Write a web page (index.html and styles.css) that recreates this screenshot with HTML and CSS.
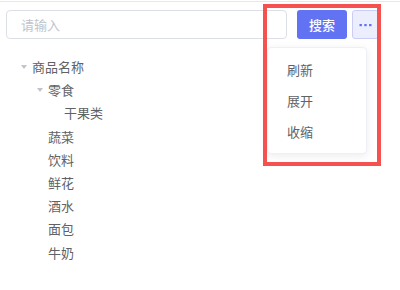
FILE: index.html
```html
<!DOCTYPE html>
<html>
<head>
    <title>Tree Filter</title>
    <link rel="stylesheet" href="styles.css">
</head>
<body>
    <div class="page">
        <div class="toolbar">
            <input type="text" class="search-input" placeholder="请输入">
            <button type="button" class="search-button">搜索</button>
            <button type="button" class="more-button">
                <svg width="13" height="4" viewBox="0 0 13 4">
                    <rect x="0.5" y="1" width="2.4" height="2.2" fill="#5e72f2"/>
                    <rect x="5.3" y="1" width="2.4" height="2.2" fill="#5e72f2"/>
                    <rect x="10.1" y="1" width="2.4" height="2.2" fill="#5e72f2"/>
                </svg>
            </button>
        </div>

        <ul class="dropdown">
            <li>刷新</li>
            <li>展开</li>
            <li>收缩</li>
        </ul>
        <div class="highlight"></div>

        <ul class="tree">
            <li class="node level-0"><span class="caret"></span>商品名称</li>
            <li class="node level-1"><span class="caret"></span>零食</li>
            <li class="node level-2"><span class="caret leaf"></span>干果类</li>
            <li class="node level-1"><span class="caret leaf"></span>蔬菜</li>
            <li class="node level-1"><span class="caret leaf"></span>饮料</li>
            <li class="node level-1"><span class="caret leaf"></span>鲜花</li>
            <li class="node level-1"><span class="caret leaf"></span>酒水</li>
            <li class="node level-1"><span class="caret leaf"></span>面包</li>
            <li class="node level-1"><span class="caret leaf"></span>牛奶</li>
        </ul>
    </div>
</body>
</html>
```
FILE: styles.css
```css
body {
    margin: 0;
    font-family: "Noto Sans CJK SC", "Liberation Sans", sans-serif;
    font-size: 13px;
    color: #606266;
    background: #fff;
}
.page {
    position: relative;
    margin-top: 1px;
    border-top: 1px solid #e4e7ed;
    height: 288px;
}
.toolbar {
    display: flex;
    align-items: center;
    padding: 8px 0 0 6px;
    height: 29px;
}
.search-input {
    box-sizing: border-box;
    width: 281px;
    height: 29px;
    border: 1px solid #dcdfe6;
    border-radius: 4px;
    padding: 0 14px;
    font-family: inherit;
    font-size: 13px;
    color: #606266;
    outline: none;
}
.search-input::placeholder {
    color: #c0c4cc;
}
.search-button {
    margin-left: 10px;
    width: 50px;
    height: 29px;
    border: none;
    border-radius: 3px;
    background-color: #6172f3;
    color: #fff;
    font-family: inherit;
    font-size: 13px;
    font-weight: 500;
    padding: 0;
}
.more-button {
    box-sizing: border-box;
    margin-left: 5px;
    width: 27px;
    height: 29px;
    border: 1px solid #c9cdf8;
    border-radius: 3px;
    background-color: #eceefd;
    display: flex;
    align-items: center;
    justify-content: center;
    padding: 0;
}
.dropdown {
    position: absolute;
    left: 267px;
    top: 45px;
    width: 100px;
    height: 107px;
    box-sizing: border-box;
    margin: 0;
    padding: 6px 0 0 19px;
    list-style: none;
    background: #fff;
    border: 1px solid #eef0f5;
    border-radius: 4px;
    box-shadow: 0 2px 8px rgba(0, 0, 0, 0.08);
}
.dropdown li {
    height: 31px;
    line-height: 31px;
}
.highlight {
    position: absolute;
    left: 263px;
    top: 2px;
    width: 110px;
    height: 154px;
    border: 4px solid #f5514f;
}
.tree {
    list-style: none;
    margin: 0;
    padding: 0;
    margin-top: 16px;
}
.node {
    display: flex;
    align-items: center;
    height: 23.2px;
}
.level-0 { padding-left: 16px; }
.level-1 { padding-left: 32px; }
.level-2 { padding-left: 48px; }
.caret {
    width: 16px;
    display: flex;
    justify-content: center;
}
.caret::before {
    content: "";
    border-left: 3px solid transparent;
    border-right: 3px solid transparent;
    border-top: 4px solid #c0c4cc;
}
.caret.leaf::before {
    border-top-color: transparent;
}
```
